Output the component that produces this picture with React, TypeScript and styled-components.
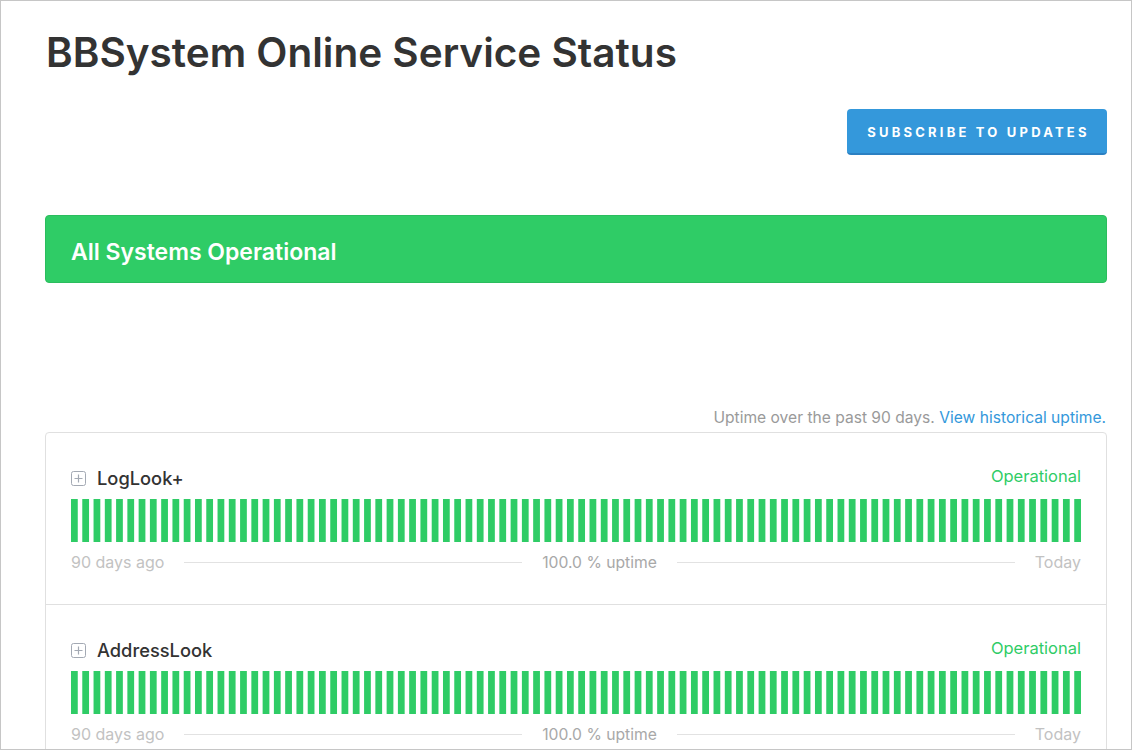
import React from 'react';
import styled, { createGlobalStyle } from 'styled-components';

const GlobalStyle = createGlobalStyle`
  html, body {
    margin: 0;
    padding: 0;
    background: #ffffff;
  }
  body {
    font-family: Inter, Lato, sans-serif;
    color: #333333;
  }
`;

const Frame = styled.div`
  box-sizing: border-box;
  width: 1132px;
  height: 750px;
  border: 1px solid #c6c6c6;
  overflow: hidden;
  padding: 28px 24px 0 44px;
`;

const Title = styled.h1`
  margin: 0;
  font-size: 40.5px;
  line-height: 48px;
  font-weight: 600;
  color: #333333;
  padding-left: 1px;
`;

const ActionRow = styled.div`
  display: flex;
  justify-content: flex-end;
  margin-top: 32px;
`;

const SubscribeButton = styled.button`
  box-sizing: border-box;
  height: 46px;
  width: 260px;
  border: none;
  border-bottom: 2px solid #2b80c2;
  border-radius: 4px;
  background: #3498db;
  color: #ffffff;
  font-family: inherit;
  font-size: 13px;
  font-weight: 700;
  letter-spacing: 3.2px;
  text-transform: uppercase;
  padding: 2px 0 0 3px;
  cursor: pointer;
`;

const Banner = styled.div`
  box-sizing: border-box;
  margin-top: 60px;
  height: 68px;
  display: flex;
  align-items: center;
  padding: 5px 25px 0;
  background: #2fcc66;
  border: 1px solid #2bbd5e;
  border-radius: 4px;
  color: #ffffff;
  font-size: 23px;
  font-weight: 600;
`;

const UptimeNote = styled.div`
  margin-top: 125px;
  text-align: right;
  font-size: 15.6px;
  line-height: 20px;
  color: #9a9a9a;
  padding-right: 1px;

  a {
    color: #3498db;
    text-decoration: none;
  }
`;

const Card = styled.div`
  margin-top: 4px;
  border: 1px solid #e0e0e0;
  border-radius: 4px;
`;

const Row = styled.div`
  padding: 33px 25px 32px;
  & + & {
    border-top: 1px solid #e0e0e0;
  }
`;

const RowHead = styled.div`
  display: flex;
  align-items: center;
  height: 24px;
`;

const Name = styled.span`
  margin-left: 11px;
  font-size: 18.3px;
  font-weight: 500;
  color: #333333;
`;

const State = styled.span`
  margin-left: auto;
  font-size: 16.5px;
  color: #2fcc66;
  position: relative;
  top: -2px;
`;

const Bars = styled.svg`
  display: block;
  width: 100%;
  height: 43px;
  margin-top: 9px;
`;

const Legend = styled.div`
  display: flex;
  align-items: center;
  height: 20px;
  margin-top: 10px;
  font-size: 16px;
`;

const LegendEnd = styled.span`
  color: #c2c2c2;
`;

const LegendMid = styled.span`
  color: #a8a8a8;
  font-size: 15.7px;
`;

const Spacer = styled.div`
  flex: 1;
  height: 1px;
  background: #e2e2e2;
  margin: 0 20px;
`;

const PlusIcon = () => (
  <svg width="15" height="15" viewBox="0 0 15 15">
    <rect x="0.5" y="0.5" width="14" height="14" rx="2" fill="none" stroke="#a3a9b3" strokeWidth="1" />
    <path d="M7.5 3.5v8M3.5 7.5h8" stroke="#a3a9b3" strokeWidth="1.2" />
  </svg>
);

const components = ['LogLook+', 'AddressLook'];

const App: React.FC = () => {
  return (
    <>
      <GlobalStyle />
      <Frame>
        <Title>BBSystem Online Service Status</Title>
        <ActionRow>
          <SubscribeButton>Subscribe to updates</SubscribeButton>
        </ActionRow>
        <Banner>All Systems Operational</Banner>
        <UptimeNote>
          Uptime over the past 90 days. <a href="#">View historical uptime.</a>
        </UptimeNote>
        <Card>
          {components.map((name) => (
            <Row key={name}>
              <RowHead>
                <PlusIcon />
                <Name>{name}</Name>
                <State>Operational</State>
              </RowHead>
              <Bars viewBox="0 0 448 34" preserveAspectRatio="none">
                {[...Array(90)].map((_, i) => (
                  <rect key={i} x={i * 5} y={0} width={3} height={34} fill="#2fcc66" />
                ))}
              </Bars>
              <Legend>
                <LegendEnd>90 days ago</LegendEnd>
                <Spacer />
                <LegendMid>100.0 % uptime</LegendMid>
                <Spacer />
                <LegendEnd>Today</LegendEnd>
              </Legend>
            </Row>
          ))}
        </Card>
      </Frame>
    </>
  );
};

export default App;
